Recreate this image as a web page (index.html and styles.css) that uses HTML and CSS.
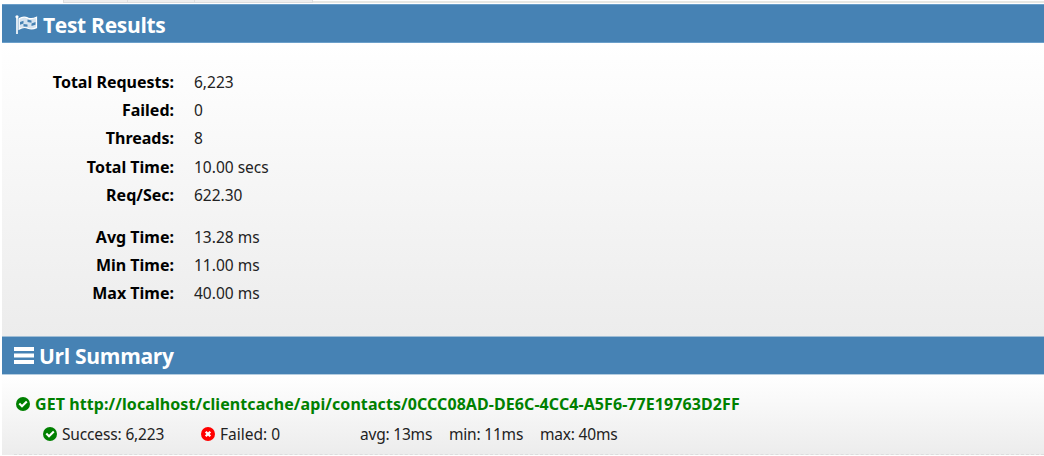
FILE: index.html
```
<!DOCTYPE html>
<html lang="en">
<head>
<meta charset="utf-8">
<title>Test Results</title>
<link rel="stylesheet" href="styles.css">
</head>
<body>
<svg class="defs" width="0" height="0">
  <symbol id="ok" viewBox="0 0 14 14"><circle cx="7" cy="7" r="7" fill="#008000"/><path d="M3.3 6.6 6 9.3 10.8 4.500" fill="none" stroke="#fff" stroke-width="2.1"/></symbol>
  <symbol id="bad" viewBox="0 0 14 14"><circle cx="7" cy="7" r="7" fill="#f00"/><path d="M4.7 4.7 9.3 9.3M9.3 4.7 4.7 9.3" fill="none" stroke="#fff" stroke-width="2.3"/></symbol>
</svg>
<div class="tabs"><div class="tab tab-a"></div><div class="tab tab-b"></div><div class="tab tab-c"></div><div class="tab-rest"></div></div>
<main class="page">
  <h2 class="bar bar-results">
    <svg class="flag" viewBox="0 0 23 20"><path d="M1 1h2v18H1z" fill="#dce8f2"/><circle cx="2" cy="1.8" r="1.600" fill="#fff"/><path d="M4 3.800C7 1.800 10 1.700 13 3.100c3 1.200 5.500.7 8.500-.8v10.300c-3 1.600-5.500 2-8.500.7-3-1.400-6-.9-9 .9z" fill="#d5e3ef" stroke="#fff" stroke-width="1.200"/><path d="M5 7 8.500 5.800v2.700L5 9.700zM12.500 4.500l4 .9v2.400l-4-.9zM8.500 9l4 .5v2.300l-4-.4zM16.500 8.500 20.500 7v2.700l-4 1.300z" fill="#4682b4"/></svg>
    <span class="title">Test Results</span>
  </h2>
  <section class="results">
    <dl class="stats">
      <dt>Total Requests:</dt><dd>6,223</dd>
      <dt>Failed:</dt><dd>0</dd>
      <dt>Threads:</dt><dd>8</dd>
      <dt>Total Time:</dt><dd>10.00 secs</dd>
      <dt>Req/Sec:</dt><dd>622.30</dd>
    </dl>
    <dl class="stats times">
      <dt>Avg Time:</dt><dd>13.28 ms</dd>
      <dt>Min Time:</dt><dd>11.00 ms</dd>
      <dt>Max Time:</dt><dd>40.00 ms</dd>
    </dl>
  </section>
  <h2 class="bar bar-summary">
    <svg class="list" viewBox="0 0 20 17"><path d="M0 0h20v4H0zM0 6.500h20v4H0zM0 13h20v4H0z" fill="#fff"/></svg>
    <span class="title">Url Summary</span>
  </h2>
  <section class="summary">
    <div class="url"><svg class="mark"><use href="#ok"/></svg><span>GET http://localhost/clientcache/api/contacts/0CCC08AD-DE6C-4CC4-A5F6-77E19763D2FF</span></div>
    <div class="counts">
      <div class="success"><svg class="mark"><use href="#ok"/></svg><span>Success: 6,223</span></div>
      <div class="failed"><svg class="mark"><use href="#bad"/></svg><span>Failed: 0</span></div>
      <span class="avg">avg: 13ms</span><span class="min">min: 11ms</span><span class="max">max: 40ms</span>
    </div>
    <div class="rule"></div>
  </section>
</main>
</body>
</html>
```
FILE: styles.css
```
* { box-sizing: border-box; margin: 0; padding: 0; }
body { background: #fff; color: #222; font: 15.5px/28px "Noto Sans", "Open Sans", sans-serif; overflow: hidden; }
.defs { display: block; }
.tabs { display: flex; height: 4px; padding-left: 63px; }
.tab { height: 3px; background: #eee; border-bottom: 1px solid #ddd; border-left: 1px solid #ddd; }
.tab-a { width: 64px; }
.tab-b { width: 67px; }
.tab-c { width: 119px; border-right: 1px solid #ddd; }
.tab-rest { flex: 1; height: 3px; border-bottom: 2px solid #e7e7e3; }
.page { margin-left: 2px; }
.bar { display: flex; align-items: center; background: #4682b4; color: #fff; font-family: "Open Sans", "Noto Sans", sans-serif; font-size: 21px; font-weight: 700; white-space: nowrap; }
.bar-results { height: 39px; padding-left: 13px; border-top: 1px solid #6b9fca; border-bottom: 1px solid #6b9fca; }
.bar-summary { height: 39px; padding-left: 12px; border-top: 1px solid #9fbdd5; border-bottom: 1px solid #b5cde0; }
.flag { width: 23px; height: 20px; margin: 2px 5px 0 0; }
.list { width: 20px; height: 17px; margin-right: 5px; }
.title { letter-spacing: -0.3px; }
.bar-results .title { padding-top: 2px; }
.results { height: 293px; padding-top: 25px; background: linear-gradient(#fff, #ececec); }
.stats { display: grid; grid-template-columns: 172px 1fr; column-gap: 20px; grid-auto-rows: 28.2px; white-space: nowrap; }
.stats dt { text-align: right; font-size: 16px; font-weight: 700; color: #000; letter-spacing: 0; }
.stats dd { letter-spacing: 0; }
.times { margin-top: 14px; }
.summary { height: 80px; padding-top: 15px; background: linear-gradient(#fff, #ececec); white-space: nowrap; }
.mark { width: 14px; height: 14px; flex: none; margin-right: 5px; }
.url { display: flex; align-items: center; height: 28px; padding-left: 14px; line-height: 26px; font-size: 16px; font-weight: 700; color: #008000; letter-spacing: 0.08px; }
.url span { padding-bottom: 1px; }
.counts { display: flex; height: 31px; line-height: 33px; padding-left: 41px; letter-spacing: -0.2px; }
.success, .failed { display: flex; align-items: center; height: 32px; }
.success { width: 158px; letter-spacing: -0.15px; }
.failed { width: 159px; letter-spacing: 0; }
.avg { width: 89px; }
.min { width: 91px; }
.rule { margin: 5px 0 0 12px; border-top: 1px dashed #ddd; }
```
